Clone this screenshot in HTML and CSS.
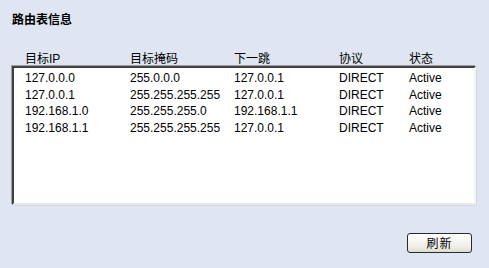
FILE: index.html
```html
<!DOCTYPE html>
<html>
<head>
<meta charset="utf-8">
<link rel="stylesheet" href="styles.css">
</head>
<body>
<div class="page">
  <div class="title">路由表信息</div>
  <div class="row head">
    <span>目标IP</span><span>目标掩码</span><span>下一跳</span><span>协议</span><span>状态</span>
  </div>
  <div class="listbox">
    <div class="row"><span>127.0.0.0</span><span>255.0.0.0</span><span>127.0.0.1</span><span>DIRECT</span><span>Active</span></div>
    <div class="row"><span>127.0.0.1</span><span>255.255.255.255</span><span>127.0.0.1</span><span>DIRECT</span><span>Active</span></div>
    <div class="row"><span>192.168.1.0</span><span>255.255.255.0</span><span>192.168.1.1</span><span>DIRECT</span><span>Active</span></div>
    <div class="row"><span>192.168.1.1</span><span>255.255.255.255</span><span>127.0.0.1</span><span>DIRECT</span><span>Active</span></div>
  </div>
  <div class="actions">
    <button class="btn">刷新</button>
  </div>
</div>
</body>
</html>
```
FILE: styles.css
```css
html, body {
  margin: 0;
  padding: 0;
  background: #dfe6f1;
}
.page {
  width: 489px;
  height: 268px;
  box-sizing: border-box;
  padding: 12px 13px 0 12px;
  font-family: "Liberation Sans", Arial, "Noto Sans CJK SC", sans-serif;
  font-size: 12px;
  color: #000;
}
.title {
  font-family: "Noto Sans CJK SC", sans-serif;
  font-weight: bold;
  font-size: 12px;
  line-height: 14px;
}
.row {
  display: grid;
  grid-template-columns: 105px 104px 105px 70px 1fr;
  padding-left: 11px;
  line-height: 16.7px;
  white-space: nowrap;
}
.head {
  margin-top: 26px;
  line-height: 14px;
  padding-left: 13px;
}
.listbox {
  box-sizing: border-box;
  height: 139px;
  width: 464px;
  background: #fff;
  border-top: 2px solid #404040;
  border-left: 2px solid #404040;
  border-right: 2px solid #f4f4f4;
  border-bottom: 2px solid #eaeaea;
  box-shadow: -1px -1px 0 #a0a0a0, 1px 1px 0 #d4d8de;
  padding-top: 2px;
}
.actions {
  display: flex;
  justify-content: flex-end;
  margin-top: 28px;
  padding-right: 4px;
}
.btn {
  width: 65px;
  height: 20px;
  padding: 0;
  border: 1px solid #2b2b2b;
  border-radius: 3px;
  background: linear-gradient(#ffffff, #f0efe8 70%, #dcdad0);
  font-family: "Noto Sans CJK SC", sans-serif;
  font-size: 12px;
  line-height: 18px;
  color: #000;
  letter-spacing: 1px;
}
```
